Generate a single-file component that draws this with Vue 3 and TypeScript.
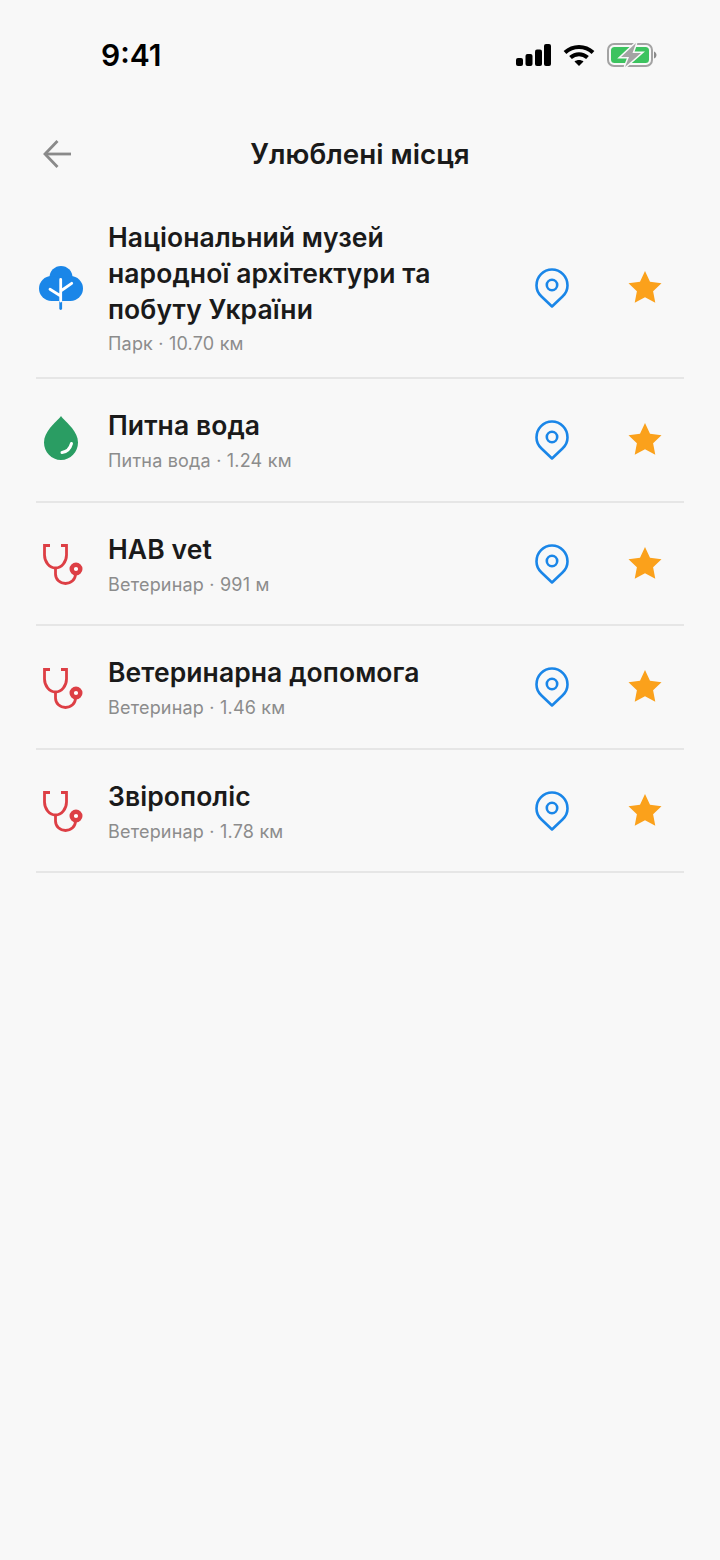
<template>
  <div class="screen">
    <div class="status-bar">
      <span class="time">9:41</span>
      <div class="status-icons">
        <svg width="36" height="24" viewBox="0 0 36 24">
          <rect x="1" y="15" width="7" height="8" rx="2" fill="#000" />
          <rect x="10.5" y="11" width="7" height="12" rx="2" fill="#000" />
          <rect x="20" y="6.5" width="7" height="16.5" rx="2" fill="#000" />
          <rect x="29" y="1" width="7" height="22" rx="2" fill="#000" />
        </svg>
        <svg width="32" height="24" viewBox="0 0 32 24" fill="none" stroke="#000" stroke-width="4">
          <path d="M2 9.500C10 2 22 2 30 9.500" />
          <path d="M7.500 14.500c5-4.500 12-4.500 17 0" />
          <path d="M16 23l-4.500-4.500c2.500-2 6.500-2 9 0z" fill="#000" stroke="none" />
        </svg>
        <svg width="50" height="24" viewBox="0 0 50 24">
          <rect x="1" y="1" width="44" height="22" rx="6" fill="none" stroke="#a3a3a3" stroke-width="2" />
          <rect x="4" y="4" width="38" height="16" rx="3.500" fill="#3cc35f" />
          <path d="M47 8.500c1.500.5 2.500 2 2.500 3.500s-1 3-2.500 3.500z" fill="#8a8a8a" />
          <path d="M29 0L14 14h8l-4 10 16-14h-8.500z" fill="#a3a3a3" stroke="#f8f8f8" stroke-width="3" paint-order="stroke" />
        </svg>
      </div>
    </div>

    <header class="nav">
      <svg class="back" width="30" height="30" viewBox="0 0 30 30" fill="none" stroke="#8a8a8a" stroke-width="2.800">
        <path d="M29 15H3" />
        <path d="M15.500 2L3 15l12.500 13" />
      </svg>
      <h1>Улюблені місця</h1>
    </header>

    <ul class="list">
      <li v-for="place in places" :key="place.name" class="row">
        <div class="kind">
          <svg v-if="place.kind === 'park'" width="44" height="44" viewBox="0 0 44 44" fill="#1a86e8">
            <circle cx="22" cy="11.500" r="11.500" />
            <circle cx="12.500" cy="22.500" r="12.500" />
            <circle cx="31.500" cy="22.500" r="12.500" />
            <rect x="12" y="22" width="20" height="13" />
            <path d="M21.700 33v9.500" fill="none" stroke="#1a86e8" stroke-width="2.800" stroke-linecap="round" />
            <path d="M21.700 13.500V35M11 23.300l10.700 6.700M32.700 17.300l-11 7.700" fill="none" stroke="#fff" stroke-width="2.800" stroke-linecap="round" />
          </svg>
          <svg v-else-if="place.kind === 'water'" class="drop" width="36" height="46" viewBox="0 0 36 46">
            <path d="M18 1c2 3 7 7 11 12 3.500 4.500 6 9 6 14.500C35 37 27.500 45 18 45S1 37 1 27.500C1 22 3.500 17.500 7 13 11 8 16 4 18 1z" fill="#2a9d63" />
            <path d="M19 37.500c4-.5 8-3.500 9.500-9" fill="none" stroke="#fff" stroke-width="3" stroke-linecap="round" />
          </svg>
          <svg v-else class="vet" width="40" height="41" viewBox="0 0 40 41" fill="none" stroke="#dd3f45" stroke-width="2.800">
            <path d="M7 1.500H1.500V11c0 7 5 13 11 13s11-6 11-13V1.500H18" />
            <path d="M12.500 24v6c0 5.500 4.500 9.500 10 9.500s10-4 10-9.500" />
            <circle cx="33" cy="25" r="4.300" fill="#fff" stroke-width="4.400" />
          </svg>
        </div>
        <div class="info">
          <div class="name">{{ place.name }}</div>
          <div class="meta">{{ place.meta }}</div>
        </div>
        <div class="pin">
          <svg width="34" height="40" viewBox="0 0 34 40" fill="none" stroke="#1a86e8" stroke-width="2.600" stroke-linejoin="round">
            <path d="M17 38.500L6.500 28.500C3 25.300 1.500 21.500 1.500 17.500 1.500 8.500 8.500 1.500 17 1.500s15.500 7 15.500 16c0 4-1.500 7.800-5 11z" />
            <circle cx="17" cy="17" r="5.200" />
          </svg>
        </div>
        <div class="star">
          <svg width="34" height="32" viewBox="0 0 34 32">
            <path d="M17 0l5 10.700 11.500 1.500-8.400 8 2.200 11.600L17 26.200 6.700 31.800l2.200-11.600-8.400-8L12 10.700z" fill="#fba11b" />
          </svg>
        </div>
      </li>
    </ul>
  </div>
</template>

<script setup lang="ts">
const places = [
  { kind: 'park', name: 'Національний музей народної архітектури та побуту України', meta: 'Парк · 10.70 км' },
  { kind: 'water', name: 'Питна вода', meta: 'Питна вода · 1.24 км' },
  { kind: 'vet', name: 'НАВ vet', meta: 'Ветеринар · 991 м' },
  { kind: 'vet', name: 'Ветеринарна допомога', meta: 'Ветеринар · 1.46 км' },
  { kind: 'vet', name: 'Звірополіс', meta: 'Ветеринар · 1.78 км' },
]
</script>

<style>
html, body { background: #f8f8f8; }
</style>

<style scoped>
.screen {
  width: 720px;
  height: 1560px;
  background: #f8f8f8;
  font-family: Inter, "Noto Sans", sans-serif;
  color: #1a1a1a;
  overflow: hidden;
}
.status-bar {
  height: 110px;
  padding: 0 63px 0 101px;
  display: flex;
  justify-content: space-between;
  align-items: center;
  box-sizing: border-box;
}
.time { font-size: 30px; font-weight: 600; color: #000; }
.status-icons { display: flex; align-items: center; gap: 12px; }
.nav {
  position: relative;
  height: 88px;
  display: flex;
  align-items: center;
  justify-content: center;
}
.nav h1 { margin: 0; font-size: 27.8px; font-weight: 600; }
.back { position: absolute; left: 42px; top: 29px; }
.list { list-style: none; margin: -8px 36px 0; padding: 0; }
.row {
  display: flex;
  align-items: center;
  padding: 28px 0 27.5px;
  border-bottom: 2px solid #e6e6e6;
}
.row:first-child { padding: 29px 0 21px; }
.row:first-child .meta { margin-top: 5px; }
.kind { width: 50px; margin-right: 22px; flex: none; display: flex; justify-content: center; }
.vet { margin: 2px 0 0 3px; }
.drop { margin-bottom: 4px; }
.info { flex: 1; min-width: 0; padding-right: 70px; }
.name { font-size: 26.5px; line-height: 36px; font-weight: 600; color: #1a1a1a; letter-spacing: 0.08px; }
.meta { margin-top: 6px; font-size: 18px; line-height: 24px; color: #8c8c8c; letter-spacing: 0.2px; }
.pin { width: 34px; flex: none; margin-right: 58.5px; display: flex; }
.star { width: 34px; flex: none; margin: 0 22.5px 2px 0; display: flex; }
</style>
